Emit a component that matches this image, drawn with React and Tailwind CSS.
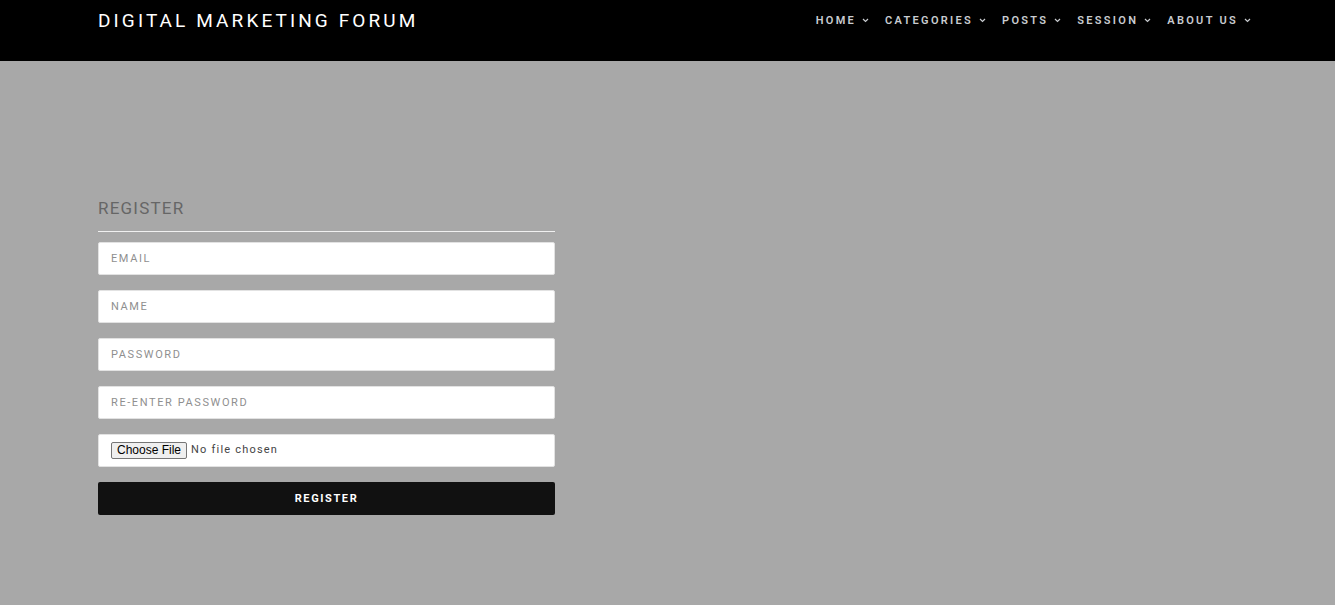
import React from "react";

const navItems = ["HOME", "CATEGORIES", "POSTS", "SESSION", "ABOUT US"];

function Chevron() {
  return (
    <svg width="7" height="5" viewBox="0 0 7 5" className="ml-[6px] mt-[-1px]">
      <path d="M1 1l2.5 2.5L6 1" fill="none" stroke="currentColor" strokeWidth="1.2" />
    </svg>
  );
}

function Field({ placeholder, type = "text" }) {
  return (
    <input
      type={type}
      placeholder={placeholder}
      className="w-full h-[33px] bg-white border border-[#e2e2e2] rounded-[2px] px-[12px] text-[11px] tracking-[1.6px] text-[#555] placeholder:text-[#8f8f8f] outline-none"
    />
  );
}

export default function App() {
  return (
    <div className="min-h-[605px] bg-[#a8a8a8] font-['Roboto',sans-serif]">
      <header className="h-[61px] bg-black flex items-start justify-between pl-[98px] pr-[84px]">
        <div className="mt-[9px] text-white text-[19px] tracking-[3.1px] leading-[24px]">
          DIGITAL MARKETING FORUM
        </div>
        <nav className="flex items-center mt-[14px] gap-[16px]">
          {navItems.map((item) => (
            <div key={item} className="flex items-center text-[#c9ccd0] text-[11px] font-semibold tracking-[2.3px] leading-[14px]">
              {item}
              <Chevron />
            </div>
          ))}
        </nav>
      </header>

      <main className="pl-[98px] pt-[137px] pb-[90px]">
        <div className="w-[457px]">
          <h2 className="text-[#666] text-[17px] tracking-[1.2px] leading-[20px] pb-[13px] border-b border-[#f0f0f0]">
            REGISTER
          </h2>
          <form className="flex flex-col gap-[15px] mt-[10px]">
            <Field placeholder="EMAIL" type="email" />
            <Field placeholder="NAME" />
            <Field placeholder="PASSWORD" type="password" />
            <Field placeholder="RE-ENTER PASSWORD" type="password" />
            <div className="h-[33px] bg-white border border-[#e2e2e2] rounded-[2px] px-[12px] flex items-center">
              <span className="h-[17px] px-[5px] border border-[#767676] rounded-[2px] bg-[#efefef] text-black text-[12px] leading-[15px] font-['Liberation_Sans',sans-serif]">
                Choose File
              </span>
              <span className="ml-[4px] text-[11px] tracking-[1.2px] text-[#444]">No file chosen</span>
            </div>
            <button
              type="button"
              className="h-[33px] pt-[1px] bg-[#111] rounded-[2px] text-white text-[11px] font-bold tracking-[1.6px]"
            >
              REGISTER
            </button>
          </form>
        </div>
      </main>
    </div>
  );
}
